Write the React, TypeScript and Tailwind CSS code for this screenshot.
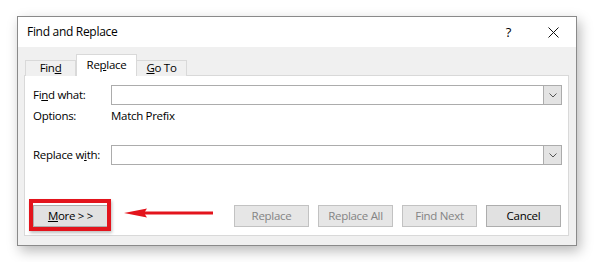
const font = { fontFamily: '"Open Sans", "Noto Sans", sans-serif' };

function Combo() {
  return (
    <div className="flex h-[20px] w-[451px] border border-[#acacac] bg-white">
      <div className="flex-1" />
      <div className="flex w-[18px] items-center justify-center border-l border-[#acacac] bg-[#e3e3e3]">
        <svg width="8" height="5" viewBox="0 0 8 5">
          <path d="M0.5 0.5 L4 4 L7.5 0.5" fill="none" stroke="#555" strokeWidth="1" />
        </svg>
      </div>
    </div>
  );
}

function Btn({ children, disabled }: { children: React.ReactNode; disabled?: boolean }) {
  return (
    <div
      className={
        disabled
          ? "flex h-[22px] w-[75px] items-center justify-center border border-[#c2c2c2] bg-[#e6e6e6] text-[#848484]"
          : "flex h-[22px] w-[75px] items-center justify-center border border-[#adadad] bg-[#e1e1e1] text-black"
      }
    >
      {children}
    </div>
  );
}

export default function App() {
  return (
    <div className="relative h-[262px] w-[594px] overflow-hidden bg-white pl-[17px] pt-[16px] text-[11.5px] leading-none tracking-[-0.3px] text-black" style={font}>
      <div className="flex h-[230px] w-[560px] flex-col border border-[#8a8a8a] bg-[#f0f0f0] shadow-[3px_5px_12px_rgba(0,0,0,0.28)]">
        {/* title bar */}
        <div className="flex h-[30px] items-center bg-white pl-[9px] pr-[17px]">
          <span className="text-[12px]">Find and Replace</span>
          <span className="ml-auto text-[13px]">?</span>
          <svg className="ml-[37px]" width="11" height="11" viewBox="0 0 11 11">
            <path d="M0.5 0.5 L10.5 10.5 M10.5 0.5 L0.5 10.5" stroke="#111" strokeWidth="1" />
          </svg>
        </div>

        {/* tabs */}
        <div className="ml-[7px] mt-[7px] flex h-[21px] items-end">
          <div className="relative -mb-px flex h-[16px] w-[51px] items-center justify-center border border-b-0 border-[#d9d9d9] bg-[#f0f0f0] pb-[1px]">
            Fin<span className="underline">d</span>
          </div>
          <div className="relative z-10 -mb-px flex h-[22px] w-[61px] items-center justify-center border border-b-0 border-[#d9d9d9] bg-white pb-[2px]">
            Re<span className="underline">p</span>lace
          </div>
          <div className="relative -mb-px flex h-[16px] w-[50px] items-center justify-center border border-b-0 border-l-0 border-[#d9d9d9] bg-[#f0f0f0] pb-[1px]">
            <span className="underline">G</span>o To
          </div>
        </div>

        {/* panel */}
        <div className="ml-[6px] flex h-[161px] w-[545px] flex-col border border-[#d9d9d9] bg-white pl-[8px] pt-[9px]">
          <div className="flex h-[20px] items-center">
            <span className="w-[78px]">
              Fi<span className="underline">n</span>d what:
            </span>
            <Combo />
          </div>
          <div className="mt-[4px] flex h-[14px] items-center">
            <span className="w-[78px]">Options:</span>
            <span>Match Prefix</span>
          </div>
          <div className="mt-[22px] flex h-[20px] items-center">
            <span className="w-[78px]">
              Replace w<span className="underline">i</span>th:
            </span>
            <Combo />
          </div>
          <div className="mt-[40px] flex items-center">
            <Btn>
              <span className="underline">M</span>ore &gt; &gt;
            </Btn>
            <div className="ml-[126px] flex gap-[9px]">
              <Btn disabled>Replace</Btn>
              <Btn disabled>Replace All</Btn>
              <Btn disabled>Find Next</Btn>
              <Btn>Cancel</Btn>
            </div>
          </div>
        </div>
      </div>

      {/* annotation */}
      <div className="absolute left-[29px] top-[199px] h-[32px] w-[82px] border-[4px] border-[#e3141c] shadow-[1px_2px_3px_rgba(0,0,0,0.25)]" />
      <svg className="absolute left-[123px] top-[207px]" width="92" height="12" viewBox="0 0 92 12">
        <path d="M1 6 L24 1.5 L22 4.5 L90 4.5 L90 7.5 L22 7.5 L24 10.5 Z" fill="#e3141c" />
      </svg>
    </div>
  );
}
